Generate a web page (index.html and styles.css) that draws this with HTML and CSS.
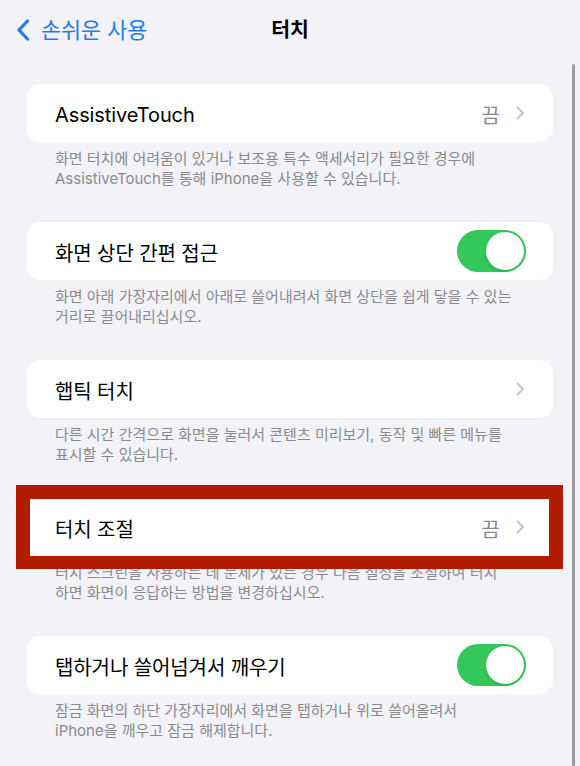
FILE: index.html
```html
<!DOCTYPE html>
<html lang="ko">
<head>
    <meta charset="UTF-8">
    <meta name="viewport" content="width=device-width, initial-scale=1.0">
    <title>터치</title>
    <link rel="stylesheet" href="styles.css">
</head>
<body>
    <!-- Navigation Bar -->
    <header class="nav">
        <a class="back" href="#">
            <svg class="back-icon" width="14" height="22" viewBox="0 0 14 22">
                <path d="M11.5 2 L3 11 L11.5 20" fill="none" stroke="#1a7cf2" stroke-width="3.2" stroke-linecap="round" stroke-linejoin="round"/>
            </svg>
            <span>손쉬운 사용</span>
        </a>
        <h1 class="title">터치</h1>
    </header>

    <main class="settings">
        <!-- AssistiveTouch -->
        <section class="group">
            <div class="cell">
                <span class="cell-label">AssistiveTouch</span>
                <span class="cell-value">끔</span>
                <svg class="chevron" width="9" height="14" viewBox="0 0 9 14"><path d="M1.5 1.5 L7 7 L1.5 12.5" fill="none" stroke="#c4c4c7" stroke-width="2" stroke-linecap="round" stroke-linejoin="round"/></svg>
            </div>
            <p class="footer">화면 터치에 어려움이 있거나 보조용 특수 액세서리가 필요한 경우에<br>AssistiveTouch를 통해 iPhone을 사용할 수 있습니다.</p>
        </section>

        <!-- Reachability -->
        <section class="group">
            <div class="cell">
                <span class="cell-label">화면 상단 간편 접근</span>
                <span class="toggle on"><span class="knob"></span></span>
            </div>
            <p class="footer">화면 아래 가장자리에서 아래로 쓸어내려서 화면 상단을 쉽게 닿을 수 있는<br>거리로 끌어내리십시오.</p>
        </section>

        <!-- Haptic Touch -->
        <section class="group">
            <div class="cell">
                <span class="cell-label">햅틱 터치</span>
                <svg class="chevron" width="9" height="14" viewBox="0 0 9 14"><path d="M1.5 1.5 L7 7 L1.5 12.5" fill="none" stroke="#c4c4c7" stroke-width="2" stroke-linecap="round" stroke-linejoin="round"/></svg>
            </div>
            <p class="footer">다른 시간 간격으로 화면을 눌러서 콘텐츠 미리보기, 동작 및 빠른 메뉴를<br>표시할 수 있습니다.</p>
        </section>

        <!-- Touch Accommodations (highlighted) -->
        <section class="group">
            <div class="cell">
                <span class="cell-label">터치 조절</span>
                <span class="cell-value">끔</span>
                <svg class="chevron" width="9" height="14" viewBox="0 0 9 14"><path d="M1.5 1.5 L7 7 L1.5 12.5" fill="none" stroke="#c4c4c7" stroke-width="2" stroke-linecap="round" stroke-linejoin="round"/></svg>
                <span class="highlight-frame"></span>
            </div>
            <p class="footer">터치 스크린을 사용하는 데 문제가 있는 경우 다음 설정을 조절하여 터치<br>하면 화면이 응답하는 방법을 변경하십시오.</p>
        </section>

        <!-- Tap or Swipe to Wake -->
        <section class="group">
            <div class="cell">
                <span class="cell-label">탭하거나 쓸어넘겨서 깨우기</span>
                <span class="toggle on"><span class="knob"></span></span>
            </div>
            <p class="footer">잠금 화면의 하단 가장자리에서 화면을 탭하거나 위로 쓸어올려서<br>iPhone을 깨우고 잠금 해제합니다.</p>
        </section>
    </main>

    <!-- Scroll indicator -->
    <div class="scrollbar"></div>
</body>
</html>
```

FILE: styles.css
```css
/* General Styling */
body {
    font-family: "Inter", "Noto Sans CJK KR", sans-serif;
    background-color: #f2f2f7;
    margin: 0;
    padding: 0;
    color: #000;
    overflow: hidden;
}

/* Navigation Bar */
.nav {
    position: relative;
    height: 60px;
    display: flex;
    align-items: center;
    justify-content: center;
}

.back {
    position: absolute;
    left: 16px;
    top: 18px;
    display: flex;
    align-items: center;
    gap: 11px;
    color: #1a7cf2;
    text-decoration: none;
    font-size: 21.8px;
    line-height: 24px;
}

.back-icon {
    display: block;
}

.title {
    margin: 0;
    font-size: 20.5px;
    font-weight: 700;
    line-height: 24px;
}

/* Settings List */
.settings {
    padding: 24px 27px 0 27px;
}

.group {
    margin-bottom: 33px;
}

.cell {
    position: relative;
    height: 58px;
    background-color: #ffffff;
    border-radius: 13px;
    display: flex;
    align-items: center;
    padding: 0 28px;
    font-size: 20px;
}

.cell-label {
    flex: 1;
    letter-spacing: -0.1px;
    margin-top: 3px;
}

.cell-value {
    color: #8a8a8e;
    margin-right: 16px;
    margin-top: 3px;
}

.chevron {
    display: block;
}

.footer {
    margin: 7px 0 0 0;
    padding: 0 28px;
    font-size: 15px;
    line-height: 20px;
    color: #8a8a8e;
    height: 40px;
    white-space: nowrap;
}

/* Toggle Switch */
.toggle {
    width: 69px;
    height: 42px;
    border-radius: 21px;
    background-color: #e9e9eb;
    display: flex;
    align-items: center;
    padding: 0 2px;
    box-sizing: border-box;
    margin-right: -1px;
}

.toggle.on {
    background-color: #34c759;
    justify-content: flex-end;
}

.knob {
    width: 38px;
    height: 38px;
    border-radius: 50%;
    background-color: #ffffff;
    box-shadow: 0 2px 4px rgba(0, 0, 0, 0.12);
}

/* Red annotation frame */
.highlight-frame {
    position: absolute;
    left: -11px;
    right: -10px;
    top: -13px;
    bottom: -13px;
    border: 14px solid #b31b00;
    border-bottom-width: 13px;
    box-sizing: border-box;
}

/* Scroll indicator */
.scrollbar {
    position: fixed;
    right: 5px;
    top: 64px;
    bottom: 0;
    width: 3px;
    border-radius: 2px;
    background-color: #98989d;
}
```
